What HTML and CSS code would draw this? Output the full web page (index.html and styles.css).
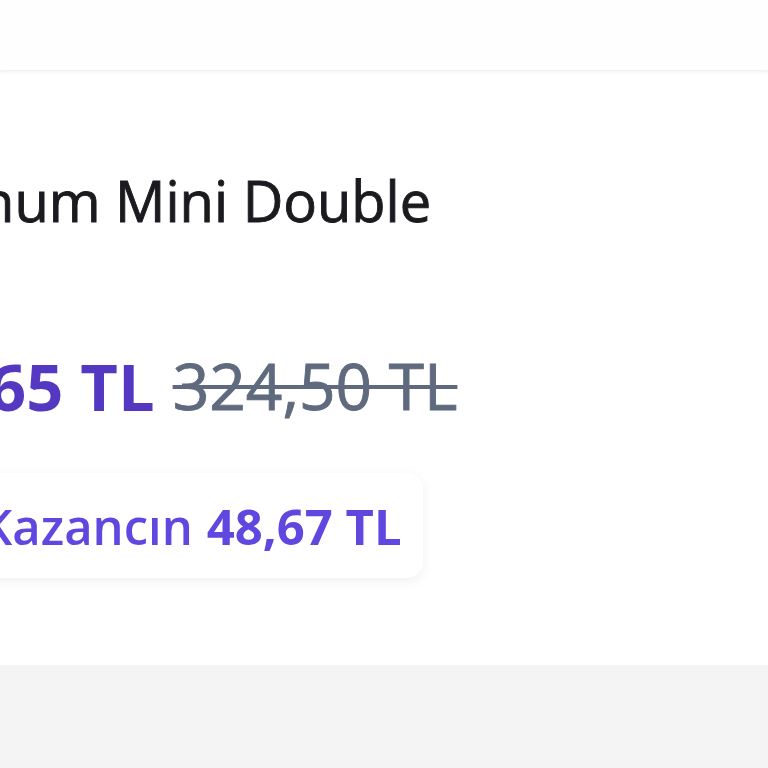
FILE: index.html
```html
<!DOCTYPE html>
<html lang="tr">
<head>
<meta charset="utf-8">
<link rel="stylesheet" href="styles.css">
</head>
<body>
<header class="topbar"></header>
<main class="card">
  <div class="content">
    <h1 class="title">Platinum Mini Double</h1>
    <div class="prices">
      <span class="price">275,65 TL</span>
      <span class="old-price">324,50 TL</span>
    </div>
    <div class="saving">
      <span class="saving-label">Kazancın</span>
      <span class="saving-value">48,67 TL</span>
    </div>
  </div>
</main>
</body>
</html>
```
FILE: styles.css
```css
html, body {
  margin: 0;
  padding: 0;
}
body {
  width: 768px;
  height: 768px;
  overflow: hidden;
  background: #f4f4f4;
  font-family: "Open Sans", "Noto Sans", sans-serif;
}
.topbar {
  height: 70px;
  background: #fefefe;
  box-shadow: 0 1px 4px rgba(120, 120, 170, 0.18);
  position: relative;
  z-index: 1;
}
.card {
  height: 595px;
  background: #ffffff;
  overflow: hidden;
}
.content {
  margin-left: -132px;
  padding-top: 92px;
  display: flex;
  flex-direction: column;
  align-items: flex-start;
}
.title {
  margin: 0 0 0 -1px;
  font-size: 56px;
  font-weight: 400;
  -webkit-text-stroke: 0.9px #1b1b1f;
  line-height: 76px;
  color: #1b1b1f;
  white-space: nowrap;
}
.prices {
  margin: 108px 0 0 -9px;
  display: flex;
  gap: 18px;
  white-space: nowrap;
  line-height: 80px;
}
.price {
  font-size: 65px;
  font-weight: 700;
  color: #5538c2;
}
.old-price {
  font-size: 64px;
  font-weight: 400;
  -webkit-text-stroke: 0.9px #5f6a7e;
  color: #5f6a7e;
  text-decoration: line-through;
  text-decoration-thickness: 4px;
}
.saving {
  margin-top: 47px;
  display: flex;
  gap: 14px;
  padding: 0 21px 0 113px;
  height: 105px;
  align-items: center;
  background: #ffffff;
  border-radius: 16px;
  box-shadow: 0 3px 12px rgba(60, 60, 90, 0.08);
  white-space: nowrap;
  font-size: 49px;
  color: #6047e0;
}
.saving-label {
  font-weight: 600;
}
.saving-value {
  font-weight: 700;
}
```
